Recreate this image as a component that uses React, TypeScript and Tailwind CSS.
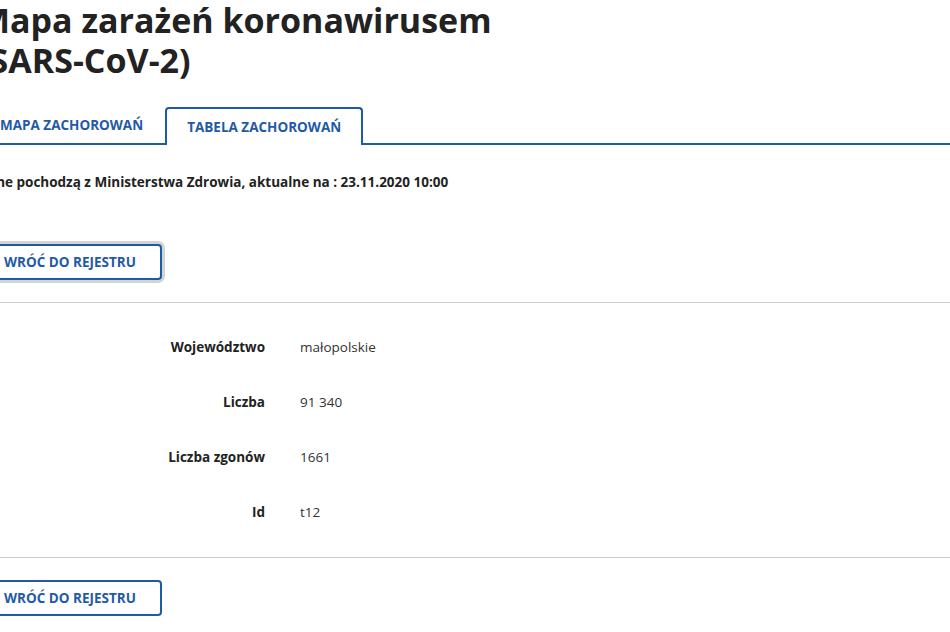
import React from 'react';

const rows = [
  { label: 'Województwo', value: 'małopolskie' },
  { label: 'Liczba', value: '91 340' },
  { label: 'Liczba zgonów', value: '1661' },
  { label: 'Id', value: 't12' },
];

const BackButton = ({ focused }: { focused?: boolean }) => (
  <button
    className={
      focused
        ? 'h-9 px-6 rounded-[4px] border-2 border-[#1f5aa6] bg-white text-[13.5px] font-bold text-[#1f5aa6] ring-[3px] ring-[#d4d4d4]'
        : 'h-9 px-6 rounded-[4px] border-2 border-[#1f5aa6] bg-white text-[13.5px] font-bold text-[#1f5aa6]'
    }
  >
    WRÓĆ DO REJESTRU
  </button>
);

const App = () => {
  return (
    <div className="min-h-screen bg-white">
      <div className="ml-[-22px] font-['Open_Sans',sans-serif] text-[#222]">
        <h1 className="max-w-[580px] text-[34px] leading-[40px] font-bold">
          Mapa zarażeń koronawirusem (SARS-CoV-2)
        </h1>

        <div className="mt-[27px] flex items-end border-b-2 border-[#1f5aa6]">
          <button className="h-[36px] px-[22px] flex items-center text-[13.5px] font-bold text-[#1f5aa6]">
            MAPA ZACHOROWAŃ
          </button>
          <button className="h-[38px] -mb-[2px] px-5 flex items-center bg-white border-2 border-b-0 border-[#1f5aa6] rounded-t-[4px] text-[13.5px] font-bold text-[#1f5aa6]">
            TABELA ZACHOROWAŃ
          </button>
        </div>

        <p className="mt-[27px] text-[13.5px] leading-5 font-bold">
          Dane pochodzą z Ministerstwa Zdrowia, aktualne na : 23.11.2020 10:00
        </p>

        <div className="mt-[52px]">
          <BackButton focused />
        </div>

        <div className="mt-[22px] border-t border-[#cfcfcf] py-[17px]">
          {rows.map((r) => (
            <div key={r.label} className="grid grid-cols-[287px_1fr] gap-x-[35px] h-[55px] items-center text-[13.5px]">
              <span className="text-right font-bold text-[#222]">{r.label}</span>
              <span className="text-[#333]">{r.value}</span>
            </div>
          ))}
        </div>

        <div className="border-t border-[#cfcfcf] pt-[22px] pb-6">
          <BackButton />
        </div>
      </div>
    </div>
  );
};

export default App;
